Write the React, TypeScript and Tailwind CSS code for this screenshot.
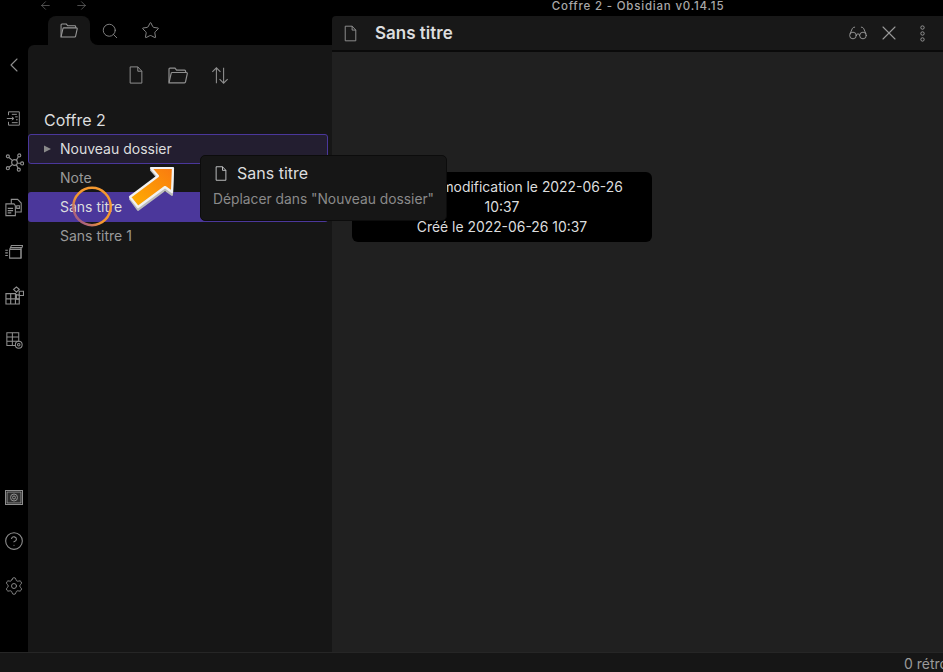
import { ArrowLeft, ArrowRight, ChevronLeft, Search, Star, Glasses, X, HelpCircle, Settings } from "lucide-react";

const font = "font-['Inter','Liberation_Sans',sans-serif]";

function FileIcon({ className }: { className?: string }) {
  return (
    <svg viewBox="0 0 16 20" fill="none" stroke="currentColor" strokeWidth="1.1" className={className}>
      <path d="M1.5 1h8.5l4.5 4.8V19h-13z" />
      <path d="M10 1v4.8h4.5" />
    </svg>
  );
}

function FolderIcon({ className }: { className?: string }) {
  return (
    <svg viewBox="0 0 20 17" fill="none" stroke="currentColor" strokeWidth="1.2" className={className}>
      <path d="M1 15.5V2.2c0-.6.4-1 1-1h5l1.6 2h8c.6 0 1 .4 1 1v1.3" />
      <path d="M1 15.8 3.2 6.2c.1-.5.5-.7 1-.7h14.2c.6 0 1 .5.9 1.1l-1.8 8.3c-.1.5-.5.9-1 .9z" />
    </svg>
  );
}

function SortIcon({ className }: { className?: string }) {
  return (
    <svg viewBox="0 0 20 20" fill="none" stroke="currentColor" strokeWidth="1.2" className={className}>
      <path d="M6 18.5V1.5M1.5 6 6 1.5 10.5 6" />
      <path d="M14 1.5v17M9.500 14l4.500 4.500 4.500-4.500" />
    </svg>
  );
}

function RibbonIcons() {
  return (
    <div className="flex flex-col items-center text-[#8f8f8f]">
      {/* import */}
      <svg viewBox="0 0 18 18" fill="none" stroke="currentColor" strokeWidth="1.200" className="w-[15px] h-[17px] mt-[94px] ml-[-1px]">
        <path d="M3 5V1h13v16H3v-4" />
        <path d="M1 9h8M7 7l2.500 2L7 11M7 4h6M11 7h3M12 10.500h2M7 14h7" />
      </svg>
      {/* graph */}
      <svg viewBox="0 0 20 20" fill="none" stroke="currentColor" strokeWidth="1.200" className="w-[19px] h-[19px] mt-[26px]">
        <circle cx="10" cy="10" r="3" />
        <circle cx="3" cy="3.500" r="1.600" />
        <circle cx="15" cy="2.500" r="1.600" />
        <circle cx="18" cy="11" r="1.600" />
        <circle cx="14.500" cy="17.500" r="1.600" />
        <circle cx="3" cy="16" r="1.600" />
        <path d="M4.200 4.700 8 8M14 4 12 7.700M16.400 10.800H13M13.800 16 12 12.500M4.300 15 8 12" />
      </svg>
      {/* copies */}
      <svg viewBox="0 0 20 20" fill="none" stroke="currentColor" strokeWidth="1.200" className="w-[18px] h-[19px] mt-[26px]">
        <path d="M1 6h9l1.500 2v11H1z" />
        <path d="M7 6V1h7l4 4v10h-6" />
        <path d="M3 11h6M3 13.500h6M3 16h4M13 8h3v3h-3z" />
      </svg>
      {/* fast cards */}
      <svg viewBox="0 0 20 16" fill="none" stroke="currentColor" strokeWidth="1.200" className="w-[18px] h-[14px] mt-[28px]">
        <path d="M5 5V15h13V3" />
        <path d="M5 5 6 3h13l1-2.500H7L6 3" />
        <path d="M5 5h13v10" />
        <path d="M0 6h3M0 9h3M0 12h3" />
      </svg>
      {/* table blocks */}
      <svg viewBox="0 0 20 20" fill="none" stroke="currentColor" strokeWidth="1.200" className="w-[19px] h-[19px] mt-[27px]">
        <path d="M1 8h10v11H1zM1 13.500h14v5.500H11M1 8v11M6 8v11M11 8v11" />
        <path d="m9 3.500 3-2.500 3 2.500-3 3zM15 5.500h4.500v4.500H15zM12 9l3 1v4h-3z" />
      </svg>
      {/* table settings */}
      <svg viewBox="0 0 20 20" fill="none" stroke="currentColor" strokeWidth="1.200" className="w-[17px] h-[17px] mt-[27px]">
        <path d="M11 16H1V1h14v10" />
        <path d="M1 6h14M1 11h14M7.500 1v15" />
        <circle cx="15" cy="15" r="4" />
        <circle cx="15" cy="15" r="1.500" />
      </svg>
    </div>
  );
}

function BottomRibbon() {
  return (
    <div className="flex flex-col items-center text-[#8f8f8f] mb-[56px]">
      <svg viewBox="0 0 18 15" fill="none" stroke="currentColor" strokeWidth="1" className="w-[18px] h-[15px]">
        <rect x="0.500" y="0.500" width="17" height="14" />
        <rect x="2" y="2" width="14" height="11" fill="#2d2d2d" />
        <circle cx="9" cy="7.500" r="3.500" />
        <circle cx="9" cy="7.500" r="1.500" />
      </svg>
      <HelpCircle strokeWidth={1.300} className="w-[20px] h-[20px] mt-[26px] -ml-[1px]" />
      <Settings strokeWidth={1.100} className="w-[20px] h-[20px] mt-[25px] -ml-[1px]" />
    </div>
  );
}

function DragArrow() {
  return (
    <svg viewBox="0 0 50 48" className="absolute left-[127px] top-[165px] w-[50px] h-[48px]">
      <defs>
        <linearGradient id="arrowFill" x1="0" y1="1" x2="1" y2="0">
          <stop offset="0" stopColor="#ffb000" />
          <stop offset="1" stopColor="#f97a10" />
        </linearGradient>
      </defs>
      <path d="M46 5 24 5 31 13 3 34 11 45 38 25 45 30z" fill="#bdbdbd" stroke="#bdbdbd" strokeWidth="2" strokeLinejoin="round" />
      <path d="M46 3 24 3 31 11 3 32 11 42 38 22 45 27z" fill="url(#arrowFill)" stroke="#f2f2f2" strokeWidth="2.200" strokeLinejoin="round" />
    </svg>
  );
}

function ClickMarker() {
  return (
    <svg viewBox="0 0 40 41" className="absolute left-[72px] top-[186px] w-[40px] h-[41px]">
      <defs>
        <linearGradient id="ringFill" x1="0" y1="0.700" x2="0.250" y2="0.450">
          <stop offset="0" stopColor="#a8607f" />
          <stop offset="1" stopColor="#f5982f" />
        </linearGradient>
      </defs>
      <circle cx="20" cy="20.500" r="18.700" fill="none" stroke="url(#ringFill)" strokeWidth="2.400" />
    </svg>
  );
}

export default function App() {
  return (
    <div className={`${font} relative w-[943px] h-[672px] overflow-hidden bg-black flex flex-col text-[#dcddde]`}>
      {/* title bar */}
      <div className="h-[16px] shrink-0 relative flex items-center">
        <div className="flex items-center gap-[23px] pl-[39px] text-[#777]">
          <ArrowLeft strokeWidth={1.200} className="w-[13px] h-[13px] -mt-[6px]" />
          <ArrowRight strokeWidth={1.200} className="w-[13px] h-[13px] -mt-[6px]" />
        </div>
        <div className="flex-1 text-center text-[11.500px] leading-[12px] text-[#a8a8a8] tracking-[0.8px] -mt-[5px] ml-[385px] font-medium">
          Coffre 2 - Obsidian v0.14.15
        </div>
        <div className="w-[140px]" />
      </div>

      <div className="flex flex-1 min-h-0">
        {/* ribbon */}
        <div className="w-[28px] shrink-0 flex flex-col justify-between items-center">
          <div className="flex flex-col items-center">
            <ChevronLeft strokeWidth={1.100} className="absolute left-[2px] top-[53px] w-[24px] h-[24px] text-[#8f8f8f]" />
            <RibbonIcons />
          </div>
          <BottomRibbon />
        </div>

        {/* sidebar */}
        <div className="w-[304px] shrink-0 flex flex-col">
          <div className="h-[29px] shrink-0 flex items-end pl-[20px]">
            <div className="relative w-[42px] h-[29px] bg-[#161616] rounded-t-[8px] flex items-center justify-center text-[#9a9a9a]">
              <FolderIcon className="w-[18px] h-[15px]" />
              <div className="absolute -right-[8px] bottom-0 w-[8px] h-[8px] bg-[#161616]">
                <div className="w-full h-full bg-black rounded-bl-[8px]" />
              </div>
            </div>
            <div className="w-[39px] h-[29px] flex items-center justify-center text-[#8a8a8a]">
              <Search strokeWidth={1.200} className="w-[18px] h-[18px]" />
            </div>
            <div className="w-[43px] h-[29px] flex items-center justify-center text-[#8a8a8a]">
              <Star strokeWidth={1.200} className="w-[19px] h-[19px]" />
            </div>
          </div>
          <div className="flex-1 bg-[#161616] rounded-tl-[6px]">
            <div className="h-[60px] flex items-center justify-center pl-[1px] gap-[24px] text-[#8f8f8f]">
              <FileIcon className="w-[16px] h-[18px] -ml-[4px]" />
              <FolderIcon className="w-[20px] h-[17px]" />
              <SortIcon className="w-[18px] h-[19px] -ml-[1px]" />
            </div>
            <div className="pt-[5px] pb-[3px] pl-[16px] text-[16px] leading-[20px] text-[#dcddde]">Coffre 2</div>
            <div className="text-[14px] leading-[18px]">
              <div className="mt-[1px] h-[30px] w-[300px] flex items-center pl-[15px] bg-[#231e30] border border-[#4a379b] rounded-[3px] text-[#dcddde]">
                <svg viewBox="0 0 8 8" className="w-[7px] h-[8px] fill-[#8a8a8a] mr-[9px]">
                  <path d="M0 0l8 4-8 4z" />
                </svg>
                Nouveau dossier
              </div>
              <div className="h-[28px] flex items-center pl-[32px] text-[#9a9a9a]">Note</div>
              <div className="h-[30px] w-[300px] flex items-center pl-[32px] bg-[#4b379b] rounded-[3px] text-[#dcddde]">Sans titre</div>
              <div className="h-[28px] flex items-center pl-[32px] text-[#9a9a9a]">Sans titre 1</div>
            </div>
          </div>
        </div>

        {/* editor pane */}
        <div className="flex-1 flex flex-col min-w-0">
          <div className="h-[36px] shrink-0 bg-[#181818] rounded-tl-[4px] flex items-center border-b-[2px] border-[#0a0a0a] pl-[12px] pr-[17px]">
            <FileIcon className="w-[13px] h-[17px] text-[#999]" />
            <span className="ml-[18px] mt-[1px] text-[17px] font-semibold text-[#dcddde]">Sans titre</span>
            <div className="flex-1" />
            <Glasses strokeWidth={1.100} className="w-[20px] h-[20px] text-[#999]" />
            <X strokeWidth={1.100} className="ml-[9px] w-[24px] h-[24px] text-[#999]" />
            <svg viewBox="0 0 8 20" fill="none" stroke="#999" strokeWidth="1.100" className="ml-[18px] w-[7px] h-[17px]">
              <circle cx="4" cy="3" r="2" />
              <circle cx="4" cy="10" r="2" />
              <circle cx="4" cy="17" r="2" />
            </svg>
          </div>
          <div className="flex-1 bg-[#202020]" />
        </div>
      </div>

      {/* status bar */}
      <div className="h-[20px] shrink-0 bg-[#161616] border-t border-[#262626] flex justify-end whitespace-nowrap overflow-hidden">
        <span className="text-[14px] leading-[22px] text-[#9a9a9a] ml-auto w-[39px]">0 rétro</span>
      </div>

      {/* file hover popover */}
      <div className="absolute left-[352px] top-[172px] w-[300px] h-[70px] bg-black rounded-[6px] text-[13.900px] leading-[20px] text-center text-[#dcddde] pt-[5px] pl-[16px] pr-[16px]">
        Dernière modification le 2022-06-26 10:37
        <br />
        Créé le 2022-06-26 10:37
      </div>

      {/* drag tooltip */}
      <div className="absolute left-[200px] top-[155px] w-[247px] h-[66px] bg-[#161616] rounded-[5px] border border-[#0c0c0c] pl-[12px] pt-[7px]">
        <div className="flex items-center text-[16px] leading-[20px] text-[#dcddde]">
          <FileIcon className="w-[12px] h-[15px] ml-[2px] mr-[10px]" />
          Sans titre
        </div>
        <div className="mt-[7px] text-[13.800px] leading-[18px] text-[#8a8a8a]">Déplacer dans "Nouveau dossier"</div>
      </div>

      <DragArrow />
      <ClickMarker />
    </div>
  );
}
